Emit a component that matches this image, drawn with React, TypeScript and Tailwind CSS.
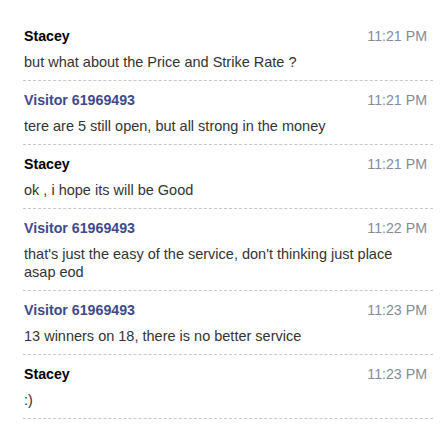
const messages = [
  { name: "Stacey", visitor: false, time: "11:21 PM", text: "but what about the Price and Strike Rate ?" },
  { name: "Visitor 61969493", visitor: true, time: "11:21 PM", text: "tere are 5 still open, but all strong in the money" },
  { name: "Stacey", visitor: false, time: "11:21 PM", text: "ok , i hope its will be Good" },
  { name: "Visitor 61969493", visitor: true, time: "11:22 PM", text: "that's just the easy of the service, don't thinking just place asap eod" },
  { name: "Visitor 61969493", visitor: true, time: "11:23 PM", text: "13 winners on 18, there is no better service" },
  { name: "Stacey", visitor: false, time: "11:23 PM", text: ":)" },
];

export default function App() {
  return (
    <div className="w-[446px] h-[431px] bg-white overflow-hidden font-['Liberation_Sans',Arial,sans-serif]">
      <div className="pt-[17px] pl-[23px] pr-[13px]">
        {messages.map((m, i) => (
          <div key={i} className="border-b border-dashed border-[#c8c8c8] pt-[10px] pb-[9px] pl-[1px] pr-[6px]">
            <div className="flex justify-between items-center h-[18px] leading-[18px]">
              <span className={"text-[14.2px] font-bold " + (m.visitor ? "text-[#3d4a8e]" : "text-black")}>{m.name}</span>
              <span className="text-[14.2px] text-[#858c96]">{m.time}</span>
            </div>
            <div className="mt-[8px] text-[14.5px] leading-[18px] text-[#333333]">{m.text}</div>
          </div>
        ))}
      </div>
    </div>
  );
}
